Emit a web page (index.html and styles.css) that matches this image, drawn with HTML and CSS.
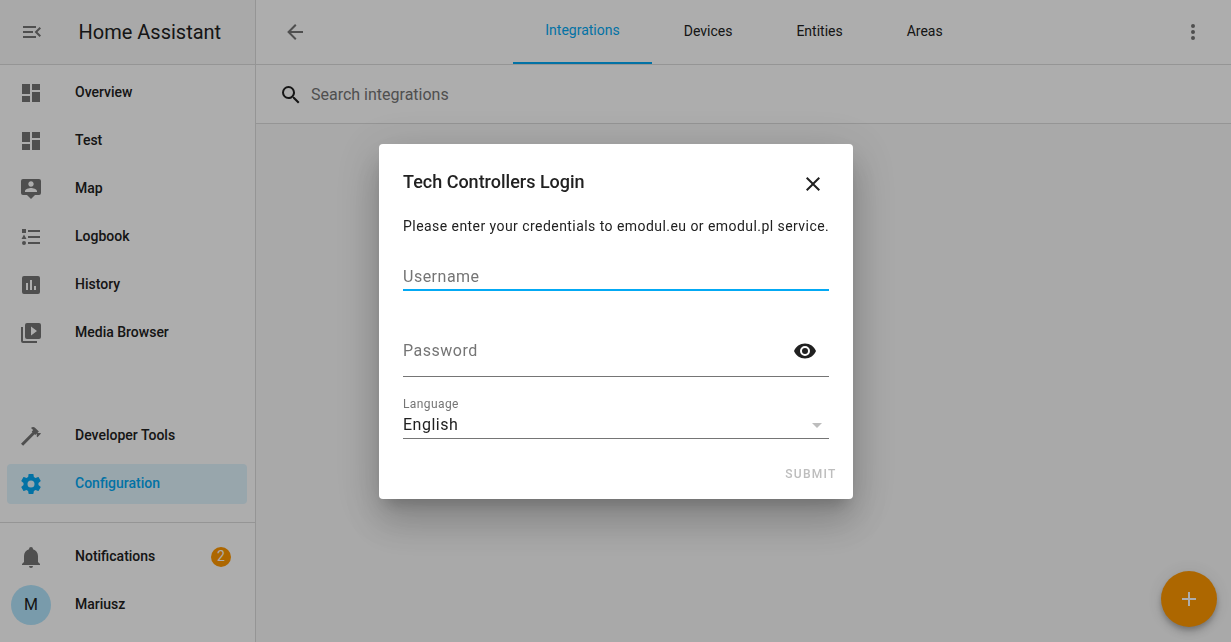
FILE: index.html
```html
<!DOCTYPE html>
<html lang="en">
<head>
<meta charset="utf-8">
<title>Home Assistant</title>
<link rel="stylesheet" href="styles.css">
</head>
<body>
<div class="app">
  <aside class="sidebar">
    <div class="sidebar-header">
      <svg class="icon" viewBox="0 0 24 24"><path d="M21,15.61L19.59,17L14.58,12L19.59,7L21,8.39L17.44,12L21,15.61M3,6H16V8H3V6M3,13V11H13V13H3M3,18V16H16V18H3Z"/></svg>
      <span class="brand">Home Assistant</span>
    </div>
    <nav class="nav">
      <a class="item"><svg class="icon" viewBox="0 0 24 24"><path d="M13,3V9H21V3M13,21H21V11H13M3,21H11V15H3M3,13H11V3H3V13Z"/></svg><span class="label">Overview</span></a>
      <a class="item"><svg class="icon" viewBox="0 0 24 24"><path d="M13,3V9H21V3M13,21H21V11H13M3,21H11V15H3M3,13H11V3H3V13Z"/></svg><span class="label">Test</span></a>
      <a class="item"><svg class="icon" viewBox="0 0 24 24"><path d="M20,2H4A2,2 0 0,0 2,4V16A2,2 0 0,0 4,18H8L12,22L16,18H20A2,2 0 0,0 22,16V4A2,2 0 0,0 20,2M12,4.3C13.5,4.3 14.7,5.5 14.7,7C14.7,8.5 13.5,9.7 12,9.7C10.5,9.7 9.3,8.5 9.3,7C9.3,5.5 10.5,4.3 12,4.3M18,15H6V14.1C6,12.1 10,11 12,11C14,11 18,12.1 18,14.1V15Z"/></svg><span class="label">Map</span></a>
      <a class="item"><svg class="icon" viewBox="0 0 24 24"><path d="M5,9.5L7.5,14H2.5L5,9.5M3,4H7V8H3V4M5,20A2,2 0 0,0 7,18A2,2 0 0,0 5,16A2,2 0 0,0 3,18A2,2 0 0,0 5,20M9,5V7H21V5H9M9,19H21V17H9V19M9,13H21V11H9V13Z"/></svg><span class="label">Logbook</span></a>
      <a class="item"><svg class="icon" viewBox="0 0 24 24"><path d="M19,3H5A2,2 0 0,0 3,5V19A2,2 0 0,0 5,21H19A2,2 0 0,0 21,19V5A2,2 0 0,0 19,3M9,17H7V10H9V17M13,17H11V7H13V17M17,17H15V13H17V17Z"/></svg><span class="label">History</span></a>
      <a class="item"><svg class="icon" viewBox="0 0 24 24"><path d="M4,6H2V20A2,2 0 0,0 4,22H18V20H4V6M20,2H8A2,2 0 0,0 6,4V16A2,2 0 0,0 8,18H20A2,2 0 0,0 22,16V4A2,2 0 0,0 20,2M12,14.5V5.5L18,10L12,14.5Z"/></svg><span class="label">Media Browser</span></a>
      <div class="spacer"></div>
      <a class="item"><svg class="icon" viewBox="0 0 24 24"><path d="M2,19.63L13.43,8.2L12.72,7.5L14.14,6.07L12,3.89C13.2,2.7 15.09,2.7 16.27,3.89L19.87,7.5L18.45,8.91H21.29L22,9.62L18.45,13.21L17.74,12.5V9.62L16.27,11.04L15.56,10.33L4.13,21.76L2,19.63Z"/></svg><span class="label">Developer Tools</span></a>
      <a class="item selected"><svg class="icon" viewBox="0 0 24 24"><path d="M12,15.5A3.5,3.5 0 0,1 8.5,12A3.5,3.5 0 0,1 12,8.5A3.5,3.5 0 0,1 15.5,12A3.5,3.5 0 0,1 12,15.5M19.43,12.97C19.47,12.65 19.5,12.33 19.5,12C19.5,11.67 19.47,11.34 19.43,11L21.54,9.37C21.73,9.22 21.78,8.95 21.66,8.73L19.66,5.27C19.54,5.05 19.27,4.96 19.05,5.05L16.56,6.05C16.04,5.66 15.5,5.32 14.87,5.07L14.5,2.42C14.46,2.18 14.25,2 14,2H10C9.75,2 9.54,2.18 9.5,2.42L9.13,5.07C8.5,5.32 7.96,5.66 7.44,6.05L4.95,5.05C4.73,4.96 4.46,5.05 4.34,5.27L2.34,8.73C2.21,8.95 2.27,9.22 2.46,9.37L4.57,11C4.53,11.34 4.5,11.67 4.5,12C4.5,12.33 4.53,12.65 4.57,12.97L2.46,14.63C2.27,14.78 2.21,15.05 2.34,15.27L4.34,18.73C4.46,18.95 4.73,19.03 4.95,18.95L7.44,17.94C7.96,18.34 8.5,18.68 9.13,18.93L9.5,21.58C9.54,21.82 9.75,22 10,22H14C14.25,22 14.46,21.82 14.5,21.58L14.87,18.93C15.5,18.67 16.04,18.34 16.56,17.94L19.05,18.95C19.27,19.03 19.54,18.95 19.66,18.73L21.66,15.27C21.78,15.05 21.73,14.78 21.54,14.63L19.43,12.97Z"/></svg><span class="label">Configuration</span></a>
    </nav>
    <div class="account">
      <a class="item"><svg class="icon" viewBox="0 0 24 24"><path d="M21,19V20H3V19L5,17V11C5,7.9 7.03,5.17 10,4.29C10,4.19 10,4.1 10,4A2,2 0 0,1 12,2A2,2 0 0,1 14,4C14,4.1 14,4.19 14,4.29C16.97,5.17 19,7.9 19,11V17L21,19M14,21A2,2 0 0,1 12,23A2,2 0 0,1 10,21"/></svg><span class="label">Notifications</span><span class="badge">2</span></a>
      <a class="item profile"><span class="avatar">M</span><span class="label">Mariusz</span></a>
    </div>
  </aside>
  <main class="main">
    <header class="toolbar">
      <svg class="icon" viewBox="0 0 24 24"><path d="M20,11V13H8L13.5,18.5L12.08,19.92L4.16,12L12.08,4.08L13.5,5.5L8,11H20Z"/></svg>
      <div class="tabs">
        <span class="tab active">Integrations</span>
        <span class="tab">Devices</span>
        <span class="tab">Entities</span>
        <span class="tab">Areas</span>
      </div>
      <svg class="icon" viewBox="0 0 24 24"><path d="M12,16A2,2 0 0,1 14,18A2,2 0 0,1 12,20A2,2 0 0,1 10,18A2,2 0 0,1 12,16M12,10A2,2 0 0,1 14,12A2,2 0 0,1 12,14A2,2 0 0,1 10,12A2,2 0 0,1 12,10M12,4A2,2 0 0,1 14,6A2,2 0 0,1 12,8A2,2 0 0,1 10,6A2,2 0 0,1 12,4Z"/></svg>
    </header>
    <div class="search">
      <svg class="icon dark" viewBox="0 0 24 24"><path d="M9.5,3A6.5,6.5 0 0,1 16,9.5C16,11.11 15.41,12.59 14.44,13.73L14.71,14H15.5L20.5,19L19,20.5L14,15.5V14.71L13.73,14.44C12.59,15.41 11.11,16 9.5,16A6.5,6.5 0 0,1 3,9.5A6.5,6.5 0 0,1 9.5,3M9.5,5C7,5 5,7 5,9.5C5,12 7,14 9.5,14C12,14 14,12 14,9.5C14,7 12,5 9.5,5Z"/></svg>
      <span>Search integrations</span>
    </div>
  </main>
</div>
<div class="fab"><svg class="icon" viewBox="0 0 24 24"><path d="M19,13H13V19H11V13H5V11H11V5H13V11H19V13Z"/></svg></div>
<div class="scrim">
  <section class="dialog" role="dialog">
    <div class="dialog-head">
      <h2 class="title">Tech Controllers Login</h2>
      <svg class="icon dark" viewBox="0 0 24 24"><path d="M19,6.41L17.59,5L12,10.59L6.41,5L5,6.41L10.59,12L5,17.59L6.41,19L12,13.41L17.59,19L19,17.59L13.41,12L19,6.41Z"/></svg>
    </div>
    <p class="intro">Please enter your credentials to emodul.eu or emodul.pl service.</p>
    <div class="field focused"><span>Username</span></div>
    <div class="field password">
      <span>Password</span>
      <svg class="icon dark" viewBox="0 0 24 24"><path d="M12,9A3,3 0 0,0 9,12A3,3 0 0,0 12,15A3,3 0 0,0 15,12A3,3 0 0,0 12,9M12,17A5,5 0 0,1 7,12A5,5 0 0,1 12,7A5,5 0 0,1 17,12A5,5 0 0,1 12,17M12,4.5C7,4.5 2.73,7.61 1,12C2.73,16.39 7,19.5 12,19.5C17,19.5 21.27,16.39 23,12C21.27,7.61 17,4.5 12,4.5Z"/></svg>
    </div>
    <div class="caption">Language</div>
    <div class="field select">
      <span>English</span>
      <svg class="icon" viewBox="0 0 24 24"><path d="M7,10L12,15L17,10H7Z"/></svg>
    </div>
    <div class="actions"><button class="submit">SUBMIT</button></div>
  </section>
</div>
</body>
</html>
```
FILE: styles.css
```css
* { box-sizing: border-box; }
body {
  margin: 0;
  height: 642px;
  overflow: hidden;
  font-family: Roboto, sans-serif;
  font-size: 14px;
  color: #212121;
  background: #fafafa;
}
.icon { width: 24px; height: 24px; flex: none; display: block; fill: #757575; }
.icon.dark { fill: #212121; }

.app { display: flex; height: 642px; }

.sidebar {
  width: 256px;
  flex: none;
  display: flex;
  flex-direction: column;
  background: #fff;
  border-right: 1px solid #dcdcdc;
}
.sidebar-header {
  height: 65px;
  flex: none;
  display: flex;
  align-items: center;
  gap: 34.5px;
  padding: 0 20px;
  background: #fafafa;
  border-bottom: 1px solid #dcdcdc;
}
.brand { font-size: 20px; white-space: nowrap; }
.nav { flex: 1; display: flex; flex-direction: column; gap: 8px; padding: 8px 8px 18px 7px; }
.spacer { flex: 1; }
.item {
  height: 40px;
  flex: none;
  display: flex;
  align-items: center;
  padding: 0 16px 0 12px;
  border-radius: 4px;
  font-weight: 500;
}
.label { flex: 1; margin-left: 32px; line-height: 20px; padding-bottom: 2px; }
.selected { background: #e0f5fe; color: #03a9f4; }
.selected .icon { fill: #03a9f4; }
.account {
  height: 120px;
  flex: none;
  display: flex;
  flex-direction: column;
  gap: 8px;
  padding: 14px 8px 0 7px;
  border-top: 1px solid #dcdcdc;
}
.badge {
  width: 20px;
  height: 20px;
  border-radius: 50%;
  background: #ff9800;
  color: #fff;
  line-height: 19px;
  text-align: center;
  font-weight: 400;
}
.profile { padding-left: 4px; }
.avatar {
  width: 40px;
  height: 40px;
  border-radius: 50%;
  background: #b3e5fc;
  font-size: 16px;
  font-weight: 400;
  line-height: 39px;
  text-align: center;
}
.profile .label { margin-left: 24px; }

.main { flex: 1; }
.toolbar {
  height: 65px;
  display: flex;
  align-items: center;
  justify-content: space-between;
  padding: 0 26px 0 27px;
  background: #fff;
  border-bottom: 1px solid #dcdcdc;
}
.tabs { display: flex; height: 64px; }
.tab { padding: 0 32px; line-height: 62px; }
.active { color: #03a9f4; border-bottom: 2px solid #03a9f4; line-height: 60px; }
.search {
  height: 59px;
  display: flex;
  align-items: flex-start;
  gap: 8px;
  padding: 18px 0 0 23px;
  background: #fff;
  border-bottom: 1px solid #dcdcdc;
  color: #757575;
  font-size: 16px;
  line-height: 23px;
}

.fab {
  position: fixed;
  left: 1161px;
  top: 571px;
  width: 56px;
  height: 56px;
  border-radius: 50%;
  display: grid;
  place-items: center;
  background: #ff9800;
  box-shadow: 0 3px 5px -1px rgba(0,0,0,.2), 0 6px 10px rgba(0,0,0,.14), 0 1px 18px rgba(0,0,0,.12);
}
.fab .icon { fill: #fff; }

.scrim {
  position: fixed;
  inset: 0;
  display: flex;
  align-items: center;
  justify-content: center;
  background: rgba(0,0,0,.32);
}
.dialog {
  width: 474px;
  height: 355px;
  display: flex;
  flex-direction: column;
  padding: 0 24px;
  border-radius: 4px;
  background: #fff;
  box-shadow: 0 11px 15px -7px rgba(0,0,0,.2), 0 24px 38px 3px rgba(0,0,0,.14), 0 9px 46px 8px rgba(0,0,0,.12);
}
.dialog-head { display: flex; justify-content: space-between; padding: 28px 4px 0 .5px; height: 70px; }
.title { margin: 0; font-size: 18px; font-weight: 500; line-height: 20px; }
.intro { margin: 0; height: 45px; padding-left: .5px; line-height: 24px; letter-spacing: .445px; white-space: nowrap; }
.field {
  display: flex;
  justify-content: space-between;
  font-size: 16px;
  line-height: 24px;
  letter-spacing: .5px;
  color: #757575;
  border-bottom: 1px solid #757575;
}
.field span { margin-left: .5px; }
.focused { height: 32px; padding-top: 6px; border-bottom: 2px solid #03a9f4; }
.password { height: 86px; padding: 48px 12px 0 0; }
.caption { margin-top: 19px; padding-left: .5px; height: 16px; line-height: 16px; font-size: 12px; letter-spacing: .4px; color: #757575; }
.select { height: 27px; color: #212121; line-height: 26px; }
.select .icon { fill: #bdbdbd; margin-top: 1px; }
.actions { display: flex; justify-content: flex-end; margin: 26px -8px 0 0; }
.submit {
  border: 0;
  padding: 0;
  background: none;
  font: 500 12px/18px Roboto, sans-serif;
  letter-spacing: 1.25px;
  color: #bdbdbd;
}
```
